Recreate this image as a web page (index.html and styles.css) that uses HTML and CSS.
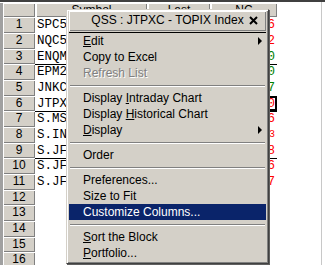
FILE: index.html
```html
<!DOCTYPE html>
<html lang="en">
<head>
    <meta charset="UTF-8">
    <title>QSS Block</title>
    <link rel="stylesheet" href="styles.css">
</head>
<body>
    <div class="sheet">
        <div class="row head">
            <div class="num"></div>
            <div class="hcell">Symbol</div>
            <div class="hcell">Last</div>
            <div class="hcell">NC</div>
            <div class="blank"></div>
        </div>
        <div class="row"><div class="num">1</div><div class="sym">SPC5</div><div class="last"></div><div class="nc up">6</div><div class="blank"></div></div>
        <div class="row"><div class="num">2</div><div class="sym">NQC5</div><div class="last"></div><div class="nc up">2</div><div class="blank"></div></div>
        <div class="row"><div class="num">3</div><div class="sym">ENQM</div><div class="last"></div><div class="nc dn">0</div><div class="blank"></div></div>
        <div class="row blk"><div class="num">4</div><div class="sym">EPM2</div><div class="last"></div><div class="nc dn">0</div><div class="blank"></div></div>
        <div class="row"><div class="num">5</div><div class="sym">JNKC</div><div class="last"></div><div class="nc dn">7</div><div class="blank"></div></div>
        <div class="row"><div class="num">6</div><div class="sym">JTPX</div><div class="last"></div><div class="nc up focus">0</div><div class="blank"></div></div>
        <div class="row blk"><div class="num">7</div><div class="sym">S.MS</div><div class="last"></div><div class="nc up">6</div><div class="blank"></div></div>
        <div class="row"><div class="num">8</div><div class="sym">S.IN</div><div class="last"></div><div class="nc up small">3</div><div class="blank"></div></div>
        <div class="row"><div class="num">9</div><div class="sym">S.JF</div><div class="last"></div><div class="nc up">8</div><div class="blank"></div></div>
        <div class="row blk"><div class="num">10</div><div class="sym">S.JF</div><div class="last"></div><div class="nc up">6</div><div class="blank"></div></div>
        <div class="row"><div class="num">11</div><div class="sym">S.JF</div><div class="last"></div><div class="nc up">7</div><div class="blank"></div></div>
        <div class="row"><div class="num">12</div><div class="sym"></div><div class="last"></div><div class="nc"></div><div class="blank"></div></div>
        <div class="row"><div class="num">13</div><div class="sym"></div><div class="last"></div><div class="nc"></div><div class="blank"></div></div>
        <div class="row"><div class="num">14</div><div class="sym"></div><div class="last"></div><div class="nc"></div><div class="blank"></div></div>
        <div class="row"><div class="num">15</div><div class="sym"></div><div class="last"></div><div class="nc"></div><div class="blank"></div></div>
        <div class="row"><div class="num">16</div><div class="sym"></div><div class="last"></div><div class="nc"></div><div class="blank"></div></div>
    </div>

    <div class="menu">
        <div class="title">
            QSS : JTPXC - TOPIX Index
            <svg class="close" width="9" height="9" viewBox="0 0 9 9">
                <path d="M1 1 L8 8 M8 1 L1 8" stroke="#000" stroke-width="2"/>
            </svg>
        </div>
        <div class="rule"></div>
        <div class="item sub"><u>E</u>dit</div>
        <div class="item">Copy to Excel</div>
        <div class="item off">Refresh List</div>
        <div class="sep"></div>
        <div class="item">Display <u>I</u>ntraday Chart</div>
        <div class="item">Display <u>H</u>istorical Chart</div>
        <div class="item sub"><u>D</u>isplay</div>
        <div class="sep"></div>
        <div class="item">Order</div>
        <div class="sep"></div>
        <div class="item">Preferences...</div>
        <div class="item">Size to Fit</div>
        <div class="item active">Customize Columns...</div>
        <div class="sep"></div>
        <div class="item"><u>S</u>ort the Block</div>
        <div class="item"><u>P</u>ortfolio...</div>
    </div>
</body>
</html>
```

FILE: styles.css
```css
body {
    margin: 0;
    background-color: #ffffff;
    font-family: 'Liberation Sans', Arial, sans-serif;
    font-size: 12px;
    color: #000000;
    overflow: hidden;
}
.sheet {
    border-top: 2px solid #404040;
}
.row {
    display: grid;
    grid-template-columns: 35px 112px 63px 67px 1fr;
    height: 16px;
}
.row:nth-child(3n+4) {
    height: 15px;
}
.row.head {
    height: 15px;
}
.num {
    border-left: 3px solid #a0a0a0;
    background-color: #d4d0c8;
    box-shadow: inset 1px 1px #ffffff, inset -1px -1px #808080;
    text-align: center;
    font-size: 12px;
    line-height: 15px;
}
.head .num {
    margin-top: 1px;
}
.hcell {
    margin: 1px 0 0 1px;
    background-color: #d4d0c8;
    box-shadow: inset 1px 1px #ffffff, inset -1px -1px #808080;
    text-align: center;
    line-height: 14px;
}
.sym, .nc {
    font-family: 'Liberation Mono', 'Courier New', monospace;
    font-size: 12.5px;
    line-height: 16px;
    overflow: hidden;
    white-space: nowrap;
}
.sym {
    padding-left: 2px;
}
.nc {
    text-align: right;
    padding-right: 2px;
}
.nc.small {
    font-size: 10px;
}
.up {
    color: #ff0000;
}
.dn {
    color: #008000;
}
.blk .sym, .blk .last, .blk .nc {
    box-shadow: inset 0 1px #000000;
}
.nc.focus {
    box-shadow: inset 0 0 0 2px #000000;
}
.blank {
    background: linear-gradient(to right, #ffffff 44px, #c8c8c8 44px, #c8c8c8 45px, #ffffff 45px);
}

/* context menu */
.menu {
    position: absolute;
    left: 66px;
    top: 9px;
    width: 197px;
    padding: 1px 2px 2px;
    background-color: #d4d0c8;
    border: 1px solid;
    border-color: #d4d0c8 #404040 #404040 #d4d0c8;
    box-shadow: inset 1px 1px #ffffff, inset -1px -1px #808080, 1px 1px #606060;
}
.title {
    position: relative;
    height: 20px;
    line-height: 19px;
    text-align: center;
    box-shadow: inset 1px 1px #ffffff, inset -1px -1px #808080;
}
.close {
    position: absolute;
    right: 8px;
    top: 5px;
}
.rule {
    height: 1px;
    margin-top: 1px;
    background-color: #000000;
}
.item {
    position: relative;
    height: 16px;
    line-height: 16px;
    padding-left: 14px;
    white-space: nowrap;
}
.item.sub::after {
    content: '';
    position: absolute;
    right: 4px;
    top: 4px;
    border-left: 4px solid #000000;
    border-top: 4px solid transparent;
    border-bottom: 4px solid transparent;
}
.item.off {
    color: #808080;
    text-shadow: 1px 1px #ffffff;
}
.item.active {
    background-color: #0a246a;
    color: #ffffff;
}
.sep {
    height: 9px;
    margin: 0 1px;
    background: linear-gradient(#d4d0c8 4px, #808080 4px, #808080 5px, #ffffff 5px, #ffffff 6px, #d4d0c8 6px);
}
```
